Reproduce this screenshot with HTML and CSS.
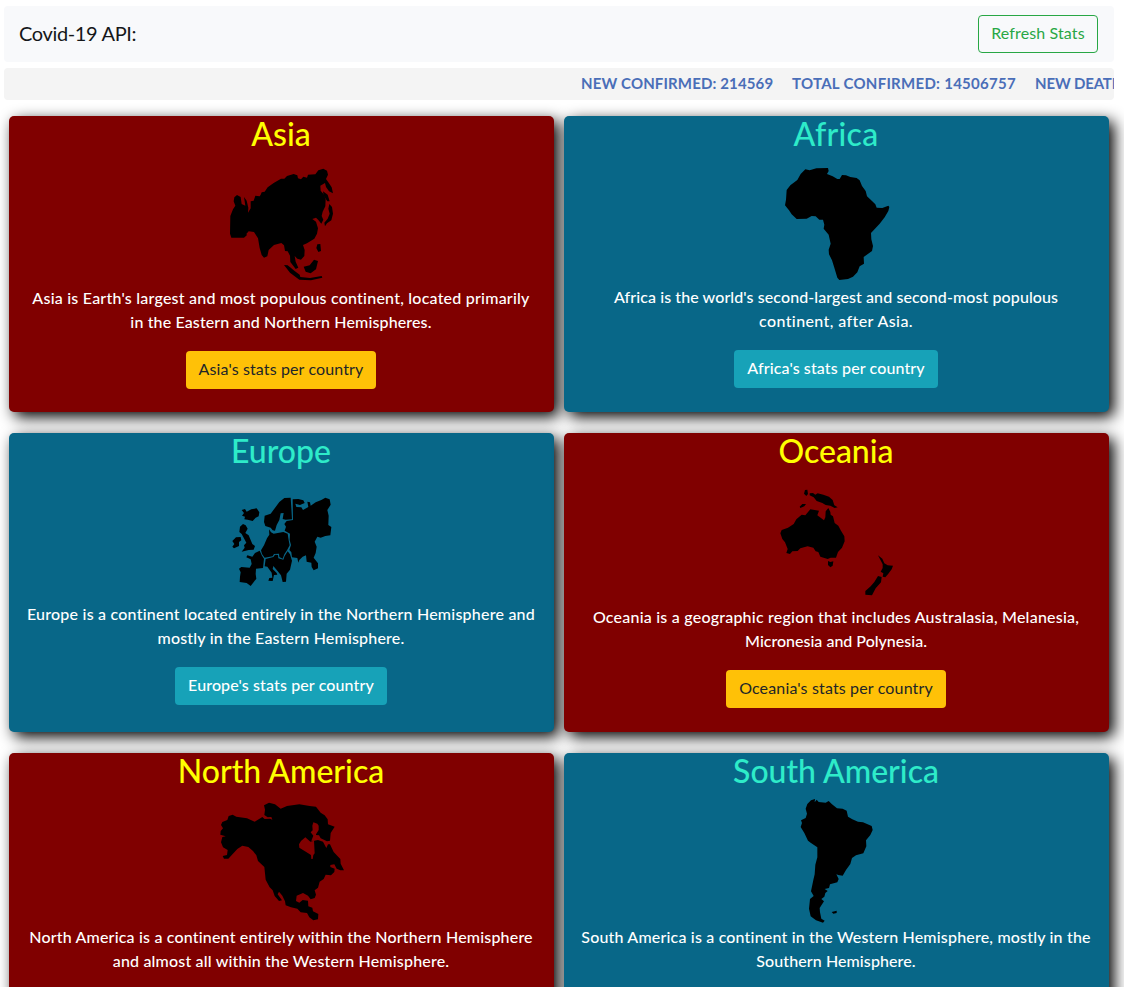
FILE: index.html
```html
<!DOCTYPE html>
<html lang="en">
<head>
<meta charset="utf-8">
<title>Covid-19 API</title>
<link rel="stylesheet" href="styles.css">
</head>
<body>
<nav class="navbar">
  <span class="brand">Covid-19 API:</span>
  <button class="btn btn-outline">Refresh Stats</button>
</nav>
<div class="ticker">
  <span class="tick tick-new">NEW CONFIRMED: 214569</span>
  <span class="tick tick-total">TOTAL CONFIRMED: 14506757</span>
  <span class="tick tick-deaths">NEW DEATHS</span>
</div>
<main class="grid">
  <section class="card red asia">
    <h2>Asia</h2>
    <svg class="map" width="133" height="133" viewBox="0 -18 399 399">
      <path d="M137 104L140 97L149 95L158 82L176 69L198 56L208 56L216 48L236 42L247 46L249 55L258 58L265 50L276 53L279 44L301 43L310 31L325 26L336 32L339 44L333 57L341 68L350 82L354 100L342 94L333 81L330 69L316 77L317 92L326 103L332 118L331 139L323 155L320 168L325 179L319 191L310 180L303 173L292 177L303 185L309 205L306 221L298 236L276 250L264 255L269 270L268 288L258 299L247 296L239 288L242 305L250 323L242 327L226 306L225 287L218 274L210 273L207 256L199 249L177 255L161 270L157 289L147 293L140 285L134 264L129 235L117 216L101 214L94 222L96 225L87 233L49 233L45 221L46 168L54 148L61 137L56 124L58 112L66 105L77 111L80 132L91 137L87 111L95 122L100 143L99 158L107 145L107 124L116 122L121 107L134 109Z"/>
      <path d="M324 94L338 104L344 124L337 124L326 107ZM343 132L351 141L354 161L349 181L336 190L330 199L328 188L338 176L344 161L340 146ZM307 253L316 252L318 273L310 276L304 264ZM207 315L218 316L239 333L254 344L256 351L285 354L320 348L322 353L288 361L253 359L225 338ZM266 320L284 316L297 299L309 303L303 328L287 340L272 335Z"/>
    </svg>
    <p><span class="ls-4">Asia is Earth's largest and most populous continent, located primarily</span><br><span class="ls-2">in the Eastern and Northern Hemispheres.</span></p>
    <button class="btn btn-warning w-asia">Asia's stats per country</button>
  </section>
  <section class="card blue">
    <h2 class="wide">Africa</h2>
    <svg class="map" width="133" height="132" viewBox="0 -18 399 396">
      <path d="M106 28L119 31L139 25L174 24L176 33L171 42L188 49L202 57L209 57L216 45L228 46L241 51L260 54L269 61L276 78L287 93L291 109L306 123L316 133L320 143L337 144L355 137L358 141L355 153L344 172L329 191L303 219L304 238L309 258L306 273L281 291L282 311L269 319L262 337L249 350L234 357L208 360L202 353L193 323L186 301L177 283L176 269L182 251L176 224L161 206L163 194L159 179L148 179L137 169L125 168L110 176L80 177L65 163L57 151L45 136L48 119L50 90L61 76L82 60L92 42Z"/>
    </svg>
    <p><span class="ls-1">Africa is the world's second-largest and second-most populous</span><br><span class="ls-5">continent, after Asia.</span></p>
    <button class="btn btn-info w-africa">Africa's stats per country</button>
  </section>
  <section class="card blue">
    <h2>Europe</h2>
    <svg class="map" width="123" height="132" viewBox="0 -42 369 396">
      <path d="M65 75L75 72L80 80L94 73L110 70L118 82L116 94L107 98L98 108L83 104L73 103L75 95L66 92L72 84ZM60 125L69 117L77 121L83 131L76 144L86 151L91 163L97 177L105 183L101 194L86 195L65 200L74 188L72 181L79 173L71 158L65 147L58 141ZM48 157L62 156L64 166L57 171L57 183L42 190L37 185L43 177L37 168Z"/>
      <path d="M212 38L214 69L216 103L197 104L188 102L191 84L182 85L178 105L170 120L165 137L158 136L152 128L136 123L132 111L134 92L152 86L167 66L178 51L193 39Z"/>
      <path d="M218 43L235 42L250 46L254 54L240 60L226 56L229 66L244 67L249 75L265 66L262 50L270 52L272 62L287 52L304 45L316 38L329 43L332 59L322 75L326 92L325 120L334 126L331 151L316 153L302 158L292 155L284 170L290 185L287 204L281 218L294 235L294 250L281 256L275 246L274 233L260 230L258 211L248 215L238 225L235 233L232 219L216 217L214 202L208 195L213 180L209 165L210 146L194 137L198 125L193 117L200 108L219 105Z"/>
      <path d="M147 133L153 142L161 146L190 141L203 146L206 166L209 181L201 196L193 208L188 221L178 216L177 206L162 207L158 214L134 218L126 207L123 196L132 181L141 160L148 149Z"/>
      <path d="M119 197L126 212L132 221L129 249L108 251L107 267L109 281L99 294L92 303L80 294L59 291L60 275L62 262L57 251L64 246L89 248L95 237L92 223L79 217L82 211L97 215L105 204Z"/>
      <path d="M137 222L160 216L165 209L174 210L175 220L190 224L194 213L203 199L210 208L216 227L210 254L200 266L198 290L188 291L183 271L172 257L160 243L158 252L170 264L172 269L162 270L158 288L145 287L148 279L157 278L155 263L142 245L134 244Z"/>
    </svg>
    <p><span class="ls-4">Europe is a continent located entirely in the Northern Hemisphere and</span><br><span class="ls-3">mostly in the Eastern Hemisphere.</span></p>
    <button class="btn btn-info w-europe">Europe's stats per country</button>
  </section>
  <section class="card red">
    <h2>Oceania</h2>
    <svg class="map" width="133" height="135" viewBox="0 -27 399 405">
      <path d="M105 30L112 29L114 42L109 48L102 41ZM119 40L129 39L136 44L143 40L160 44L177 50L188 60L193 76L203 82L194 84L181 77L167 75L157 69L140 63L131 52L119 46ZM89 80L97 72L108 72L103 79L91 84Z"/>
      <path d="M175 84L181 96L182 104L189 109L194 129L205 137L213 152L223 169L224 184L216 203L204 216L198 233L182 233L173 237L151 230L145 216L137 214L130 203L113 199L91 205L83 213L67 214L60 222L49 219L53 207L45 187L37 177L31 160L35 150L54 143L71 132L79 118L95 104L106 106L121 88L147 92L142 106L162 121L166 112L167 94ZM174 243L181 246L190 244L188 257L181 262L174 255ZM324 226L337 236L343 250L353 256L369 257L365 268L355 281L346 292L338 290L340 280L332 275L338 264L338 253ZM324 288L335 291L333 307L317 325L306 346L286 344L286 333L302 319L313 306Z"/>
    </svg>
    <p><span class="ls-4">Oceania is a geographic region that includes Australasia, Melanesia,</span><br><span>Micronesia and Polynesia.</span></p>
    <button class="btn btn-warning w-oceania">Oceania's stats per country</button>
  </section>
  <section class="card red">
    <h2>North America</h2>
    <svg class="map" width="143" height="135" viewBox="0 -12 429 405">
      <path d="M162 31L177 23L195 28L212 41L231 33L268 28L299 33L318 35L332 53L344 61L353 73L354 88L374 95L362 114L360 137L351 139L332 130L327 121L318 120L312 137L324 135L339 140L349 159L354 148L360 148L371 171L391 192L392 206L402 226L391 226L380 221L373 208L361 210L361 216L374 221L373 231L363 241L347 239L341 252L329 260L324 278L314 286L318 299L314 309L302 313L294 302L279 294L260 302L258 318L268 323L278 315L294 317L295 334L307 338L309 349L325 357L324 373L310 376L298 367L291 354L272 352L262 341L243 337L227 331L225 319L217 302L207 290L203 298L216 316L207 318L194 303L188 286L179 277L167 254L163 216L144 198L139 181L129 168L115 156L97 152L82 162L55 191L42 191L38 183L51 180L53 165L39 157L33 142L37 126L47 124L31 119L32 108L39 100L33 90L37 81L52 75L56 63L68 59L79 65L111 70L134 80L157 66L164 72L180 71L187 74L184 66L173 67L163 60L165 44Z"/>
      <path class="bay" d="M286 127L273 138L267 148L268 158L285 169L303 180L304 192L308 192L310 180L314 175L312 137L301 140ZM310 82L322 86L326 92L326 105L318 118L318 130L312 138L304 137L310 122L302 112L308 106L307 92Z"/>
    </svg>
    <p><span class="ls-3">North America is a continent entirely within the Northern Hemisphere</span><br><span class="ls-3">and almost all within the Western Hemisphere.</span></p>
  </section>
  <section class="card blue">
    <h2>South America</h2>
    <svg class="map" width="113" height="135" viewBox="0 3 339 405">
      <path d="M82 42L93 31L105 27L104 37L110 29L116 36L137 38L146 33L156 43L171 55L188 56L200 62L204 80L217 88L234 95L249 97L275 108L278 120L271 135L258 151L259 169L250 190L228 196L216 204L211 222L198 240L188 257L175 255L169 253L176 267L172 277L150 283L147 294L134 297L143 303L136 309L133 320L124 327L132 334L119 354L120 367L124 386L134 392L129 398L108 391L92 379L87 356L90 327L101 318L93 304L100 270L104 253L106 224L112 202L112 172L93 159L84 152L73 129L62 111L66 99L63 91L77 84L81 71L77 56ZM155 366L170 362L170 369L160 371Z"/>
    </svg>
    <p><span class="ls-3">South America is a continent in the Western Hemisphere, mostly in the</span><br><span class="ls-1">Southern Hemisphere.</span></p>
  </section>
</main>
</body>
</html>
```
FILE: styles.css
```css
* { box-sizing: border-box; }
html { overflow: hidden; }
body {
  margin: 0;
  height: 987px;
  overflow: hidden;
  padding: 6px 10px 0 4px;
  background: #fff;
  color: #212529;
  font: 16px/24px "Trebuchet MS", Lato, "Open Sans", sans-serif;
  font-variant-ligatures: none;
}
.navbar {
  display: flex;
  align-items: center;
  justify-content: space-between;
  height: 56px;
  padding: 0 16px 0 15px;
  border-radius: 4px;
  background: #f8f9fb;
}
.brand {
  padding-bottom: 2px;
  font-size: 20px;
  line-height: 30px;
  letter-spacing: -0.35px;
  color: #151719;
}
.btn {
  height: 38px;
  padding: 0 0 2px;
  border: 1px solid transparent;
  border-radius: 4px;
  font: inherit;
  letter-spacing: 0.12px;
  white-space: nowrap;
}
.btn-outline { width: 120px; border-color: #28a745; background: transparent; color: #28a745; }
.btn-warning { background: #ffc107; color: #212529; }
.btn-info { background: #17a2b8; color: #fff; font-weight: 500; }
.w-asia { width: 190px; }
.w-africa { width: 204px; }
.w-europe { width: 212px; }
.w-oceania { width: 220px; letter-spacing: 0.15px; }
.ticker {
  display: flex;
  align-items: center;
  gap: 19px;
  height: 32px;
  margin-top: 6px;
  padding: 0 0 2px 577px;
  overflow: hidden;
  border-radius: 4px;
  background: #f4f4f4;
  color: #4a6eb8;
  font-weight: 700;
  font-size: 15px;
  white-space: nowrap;
}
.tick { flex: none; }
.tick-new { width: 192px; letter-spacing: 0.14px; }
.tick-total { width: 224px; letter-spacing: 0.28px; }
.tick-deaths { letter-spacing: -0.15px; }
.grid {
  display: grid;
  grid-template-columns: 545px 545px;
  gap: 21px 10px;
  padding: 16px 5px 0;
}
.card {
  display: flex;
  flex-direction: column;
  align-items: center;
  padding: 0 1px 24px 0;
  border-radius: 5px;
  box-shadow: 5px 5px 15px #000;
  color: #fff;
  text-align: center;
}
.asia { padding-bottom: 23px; }
.red { background: #800000; }
.blue { background: #086788; }
.card h2 {
  margin: 0;
  padding-bottom: 2px;
  font-size: 32px;
  line-height: 36px;
  font-weight: 500;
}
.card .wide { letter-spacing: 0.3px; }
.red h2 { color: #ff0; }
.blue h2 { color: #2eebc9; }
.map { display: block; flex: none; fill: #000; }
.bay { fill: #800000; }
.card p { margin: -1px 0 17px; font-weight: 500; white-space: nowrap; }
.ls-1 { letter-spacing: 0.09px; }
.ls-2 { letter-spacing: 0.13px; }
.ls-3 { letter-spacing: 0.18px; }
.ls-4 { letter-spacing: 0.22px; }
.ls-5 { letter-spacing: 0.4px; }
```
